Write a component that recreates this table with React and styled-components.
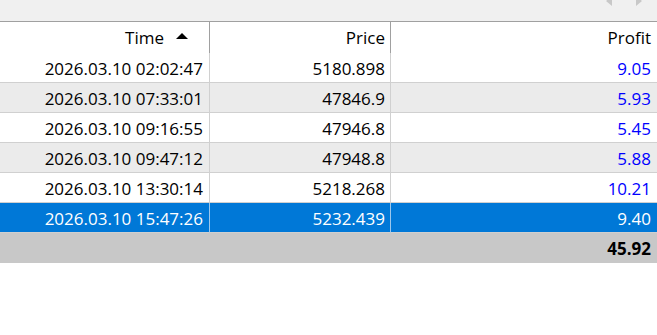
import React from 'react';
import styled, { createGlobalStyle } from 'styled-components';

const Global = createGlobalStyle`
  html, body { margin: 0; padding: 0; background: #fff; }
  body { font-family: "Open Sans", "Noto Sans", "DejaVu Sans", sans-serif; }
`;

const TopStrip = styled.div`
  height: 21px;
  background: #f0f0f0;
  border-bottom: 1px solid #a0a0a0;
  display: flex;
  justify-content: flex-end;
  align-items: flex-start;
  gap: 22px;
  padding-right: 15px;
  overflow: hidden;
`;

const Scroller = styled.svg`
  display: block;
`;

const Grid = styled.div`
  display: grid;
  grid-template-columns: 210px 181px 1fr;
  font-size: 17px;
  color: #000;
`;

const HeadCell = styled.div`
  height: 31px;
  display: flex;
  align-items: center;
  justify-content: flex-end;
  padding-right: ${p => p.$pad || 6}px;
  box-sizing: border-box;
  border-right: ${p => (p.$last ? 'none' : '1px solid #a0a0a0')};
  background: #fff;
`;

const SortArrow = styled.span`
  display: inline-block;
  width: 0;
  height: 0;
  border-left: 6px solid transparent;
  border-right: 6px solid transparent;
  border-bottom: 6px solid #000;
  margin-left: 12px;
  margin-right: 15px;
  margin-bottom: 4px;
`;

const Cell = styled.div`
  height: 30px;
  box-sizing: border-box;
  display: flex;
  align-items: center;
  justify-content: flex-end;
  padding-right: ${p => p.$pad || 6}px;
  border-bottom: 1px solid #d0d0d0;
  border-right: ${p => (p.$last ? 'none' : `1px solid ${p.$sel ? '#9cc7ec' : '#d0d0d0'}`)};
  background: ${p => (p.$sel ? '#0078d7' : p.$alt ? '#ebebeb' : '#fff')};
  color: ${p => (p.$sel ? '#fff' : p.$blue ? '#0000ff' : '#000')};
  padding-top: 1px;
`;

const TotalRow = styled.div`
  grid-column: 1 / -1;
  height: 30px;
  background: #c8c8c8;
  display: flex;
  align-items: center;
  justify-content: flex-end;
  padding-right: 6px;
  font-weight: bold;
`;

const rows = [
  ['2026.03.10 02:02:47', '5180.898', '9.05'],
  ['2026.03.10 07:33:01', '47846.9', '5.93'],
  ['2026.03.10 09:16:55', '47946.8', '5.45'],
  ['2026.03.10 09:47:12', '47948.8', '5.88'],
  ['2026.03.10 13:30:14', '5218.268', '10.21'],
  ['2026.03.10 15:47:26', '5232.439', '9.40'],
];

export default function App() {
  return (
    <>
      <Global />
      <TopStrip>
        <Scroller width="7" height="6" viewBox="0 0 7 6">
          <path d="M6 -4 L0 1 L6 6 Z" fill="#c8c8c8" />
        </Scroller>
        <Scroller width="7" height="6" viewBox="0 0 7 6">
          <path d="M1 -4 L7 1 L1 6 Z" fill="#c8c8c8" />
        </Scroller>
      </TopStrip>
      <Grid>
        <HeadCell $pad={0}>
          Time<SortArrow />
        </HeadCell>
        <HeadCell $pad={5}>Price</HeadCell>
        <HeadCell $last>Profit</HeadCell>
        {rows.map((r, i) => {
          const sel = i === rows.length - 1;
          const alt = i % 2 === 1;
          return (
            <React.Fragment key={i}>
              <Cell $sel={sel} $alt={alt}>{r[0]}</Cell>
              <Cell $sel={sel} $alt={alt} $pad={5}>{r[1]}</Cell>
              <Cell $sel={sel} $alt={alt} $last $blue>{r[2]}</Cell>
            </React.Fragment>
          );
        })}
        <TotalRow>45.92</TotalRow>
      </Grid>
    </>
  );
}
